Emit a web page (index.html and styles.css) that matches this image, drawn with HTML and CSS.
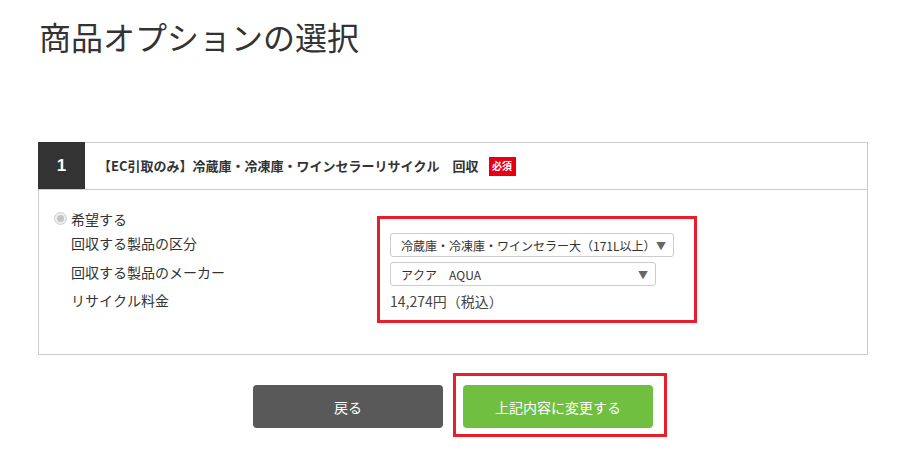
FILE: index.html
```html
<!DOCTYPE html>
<html lang="ja">
<head>
<meta charset="utf-8">
<title>商品オプションの選択</title>
<link rel="stylesheet" href="styles.css">
</head>
<body>
<div class="page">
  <h1 class="title">商品オプションの選択</h1>
  <section class="card">
    <div class="card-head">
      <div class="num">1</div>
      <div class="head-title">【EC引取のみ】冷蔵庫・冷凍庫・ワインセラーリサイクル　回収</div>
      <span class="badge">必須</span>
    </div>
    <div class="card-body">
      <div class="labels">
        <div class="radio-row"><span class="radio"><span class="dot"></span></span><span>希望する</span></div>
        <div class="label">回収する製品の区分</div>
        <div class="label">回収する製品のメーカー</div>
        <div class="label">リサイクル料金</div>
      </div>
      <div class="fields">
        <div class="select select-wide"><span>冷蔵庫・冷凍庫・ワインセラー大（171L以上）</span><span class="arrow">▼</span></div>
        <div class="select select-narrow"><span>アクア　AQUA</span><span class="arrow">▼</span></div>
        <div class="price">14,274円（税込）</div>
      </div>
    </div>
  </section>
  <div class="actions">
    <button class="btn btn-back">戻る</button>
    <span class="highlight"><button class="btn btn-submit">上記内容に変更する</button></span>
  </div>
</div>
</body>
</html>
```

FILE: styles.css
```css
* { box-sizing: border-box; }
html, body { margin: 0; padding: 0; background: #fff; }
body {
  font-family: "Noto Sans CJK JP", "Noto Sans", sans-serif;
  color: #333;
  text-spacing-trim: space-all;
  font-kerning: none;
}
.page {
  width: 907px;
  min-height: 459px;
  padding: 0 39px 31px 38px;
}
.title {
  margin: 0;
  padding: 16px 0 0 1px;
  font-size: 32px;
  line-height: 40px;
  font-weight: normal;
  color: #333;
  height: 142px;
}
.card {
  border: 1px solid #ccc;
  width: 830px;
}
.card-head {
  display: flex;
  align-items: center;
  height: 47px;
  border-bottom: 1px solid #ccc;
}
.num {
  width: 47px;
  height: 47px;
  margin: -1px 0 0 -1px;
  background: #333;
  color: #fff;
  font-weight: bold;
  font-size: 17px;
  display: flex;
  align-items: center;
  justify-content: center;
  font-family: "Liberation Sans", sans-serif;
}
.head-title {
  padding-left: 13px;
  font-size: 13px;
  font-weight: bold;
  color: #333;
  line-height: 20px;
}
.badge {
  margin-left: 10px;
  background: #e60012;
  color: #fff;
  font-size: 10px;
  font-weight: bold;
  width: 27px;
  height: 19px;
  display: flex;
  align-items: center;
  justify-content: center;
  line-height: 1;
}
.card-body {
  display: flex;
  align-items: flex-start;
  padding: 18px 0 31px 15px;
}
.labels {
  width: 323px;
  font-size: 14px;
}
.radio-row {
  display: flex;
  align-items: center;
  height: 21px;
  line-height: 20px;
}
.radio {
  width: 13px;
  height: 13px;
  border-radius: 50%;
  border: 1px solid #cfcfcf;
  background: #eee;
  display: flex;
  align-items: center;
  justify-content: center;
  margin-right: 4px;
}
.dot {
  width: 7px;
  height: 7px;
  border-radius: 50%;
  background: #c4c4c4;
}
.label {
  padding-left: 17px;
  line-height: 28.5px;
  height: 28.5px;
}
.fields {
  margin-top: 8px;
  width: 320px;
  border: 3px solid #e81f2b;
  padding: 14px 10px 9px 10px;
}
.select {
  height: 24px;
  border: 1px solid #ccc;
  border-radius: 3px;
  background: #fff;
  display: flex;
  align-items: center;
  justify-content: space-between;
  padding: 0 7px 0 10px;
  font-size: 12px;
  color: #333;
  white-space: nowrap;
}
.select-wide { width: 284px; }
.select-narrow { width: 266px; margin-top: 5px; }
.arrow {
  font-size: 10px;
  color: #666;
}
.price {
  margin-top: 5px;
  font-size: 14px;
  line-height: 20px;
  color: #444;
}
.actions {
  display: flex;
  justify-content: center;
  gap: 20px;
  margin-top: 30px;
  width: 830px;
}
.btn {
  display: block;
  width: 190px;
  height: 43px;
  border: none;
  border-radius: 4px;
  color: #fff;
  font-family: "Noto Sans CJK JP", "Noto Sans", sans-serif;
  font-size: 14px;
  cursor: pointer;
}
.btn-back { background: #595959; }
.btn-submit { background: #70bf41; }
.highlight { position: relative; display: block; }
.highlight::after {
  content: "";
  position: absolute;
  top: -12px;
  left: -10px;
  right: -14px;
  bottom: -9px;
  border: 3px solid #e81f2b;
  pointer-events: none;
}
```
